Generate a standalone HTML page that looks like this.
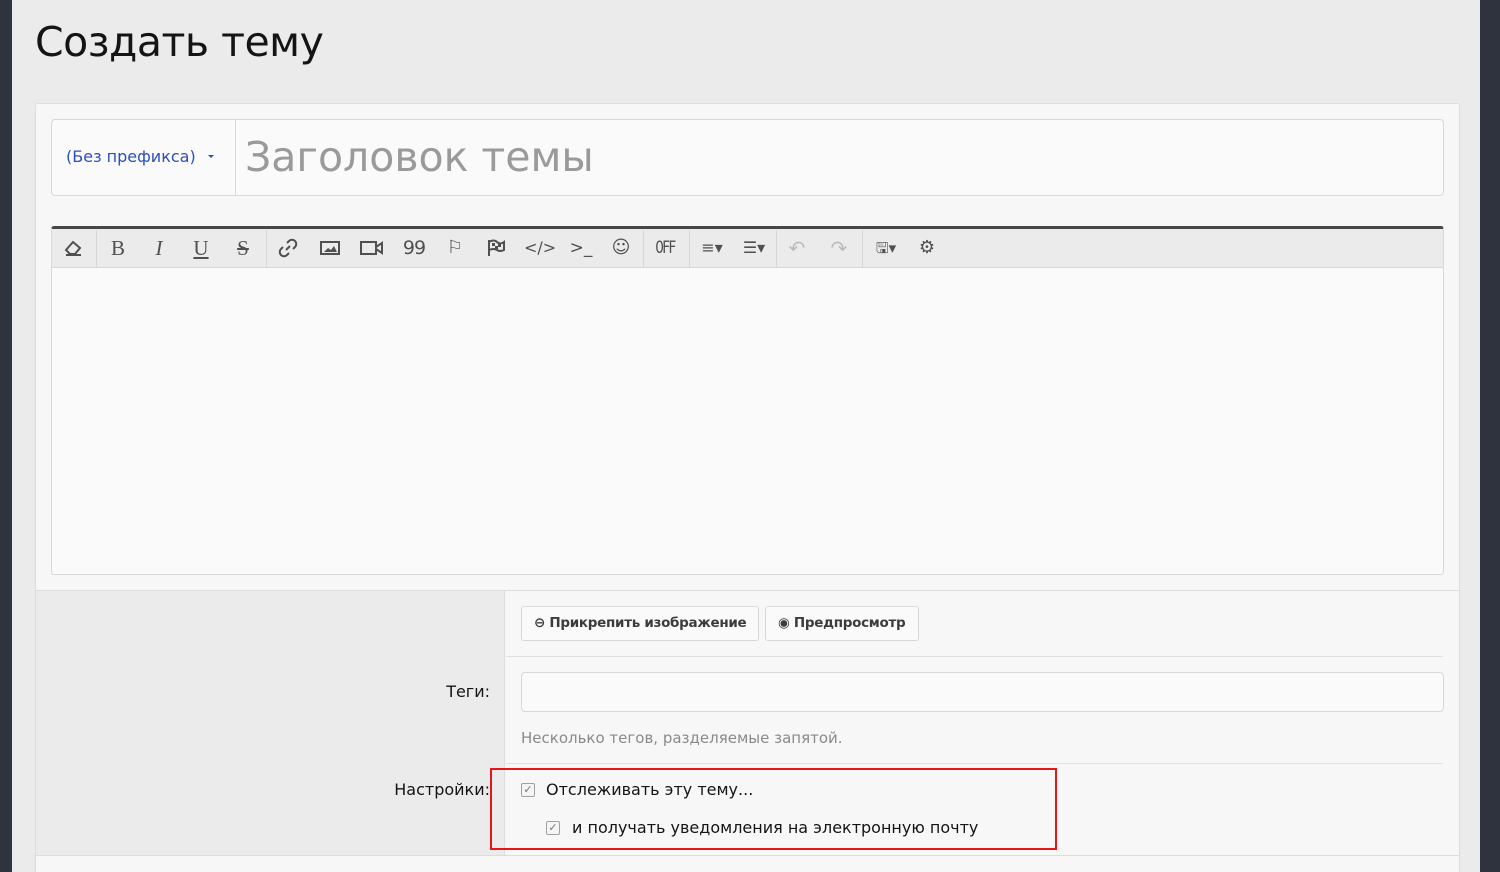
<!DOCTYPE html>
<html><head><meta charset="utf-8"><style>
*{box-sizing:border-box;margin:0;padding:0}
html,body{width:1500px;height:872px;overflow:hidden}
body{background:#ebebeb;font-family:"Liberation Sans","DejaVu Sans",sans-serif;position:relative;color:#141414}
.abs{position:absolute}
.strip{top:0;height:872px;background:#2f333d}
h1{position:absolute;left:35px;top:18px;font-size:41px;font-weight:normal;color:#141414;font-family:"DejaVu Sans","Liberation Sans",sans-serif;letter-spacing:-0.5px}
.panel{left:35px;top:103px;width:1425px;height:769px;background:#f7f7f7;border:1px solid #dcdcdc;border-bottom:none;border-radius:3px 3px 0 0}
.titlebox{left:51px;top:119px;width:1393px;height:77px;background:#fafafa;border:1px solid #d8d8d8;border-radius:4px}
.pref{left:66px;top:147px;font-size:16px;color:#2b4ec2;font-family:"DejaVu Sans",sans-serif}
.ph{left:245px;top:133px;font-size:41px;color:#9a9a9a;font-family:"DejaVu Sans",sans-serif}
.editor{left:51px;top:226px;width:1393px;height:349px;background:#fafafa;border:1px solid #d8d8d8;border-top:3px solid #474747;border-radius:3px}
.tb{left:52px;top:229px;width:1391px;height:39px;background:#ebebeb;border-bottom:1px solid #d8d8d8}
.ic{position:absolute;top:233px;width:30px;height:30px;text-align:center;line-height:30px;font-size:18px;color:#505050;font-family:"DejaVu Sans",sans-serif;white-space:nowrap}
.sep{position:absolute;top:230px;width:1px;height:37px;background:#d6d6d6}
.lower{left:36px;top:590px;width:1423px;height:266px;border-top:1px solid #ddd;border-bottom:1px solid #ddd}
.lcol{left:36px;top:591px;width:469px;height:264px;background:#ebebeb;border-right:1px solid #dcdcdc}
.btn{position:absolute;top:606px;height:35px;background:#fafafa;border:1px solid #d8d8d8;border-radius:3px;font-size:13.5px;font-weight:bold;color:#3c3c3c;line-height:33px;padding-left:12px;font-family:"DejaVu Sans",sans-serif;white-space:nowrap;letter-spacing:-0.3px;overflow:hidden}
.hl{position:absolute;left:506px;width:937px;height:1px;background:#e0e0e0}
.lbl{position:absolute;font-size:16px;text-align:right;right:1010px;font-family:"DejaVu Sans",sans-serif}
.cb{position:absolute;width:14px;height:14px;border:1px solid #a0a0a0;border-radius:2px;background:#f5f5f5;font-size:11px;line-height:12px;text-align:center;color:#777}
.t{position:absolute;font-size:16px;font-family:"DejaVu Sans",sans-serif;white-space:nowrap}
</style></head><body>
<div class="abs strip" style="left:0;width:12px"></div>
<div class="abs strip" style="left:1480px;width:20px"></div>
<h1>Создать тему</h1>
<div class="abs panel"></div>
<div class="abs titlebox"></div>
<div class="abs" style="left:235px;top:120px;width:1px;height:75px;background:#d8d8d8"></div>
<div class="abs pref">(Без префикса)</div>
<div class="abs" style="left:208px;top:155px;border-left:3px solid transparent;border-right:3px solid transparent;border-top:3px solid #2b4ec2"></div>
<div class="abs ph">Заголовок темы</div>
<div class="abs editor"></div>
<div class="abs tb"></div>
<div class="sep" style="left:96px"></div><div class="sep" style="left:266px"></div><div class="sep" style="left:643px"></div><div class="sep" style="left:689px"></div><div class="sep" style="left:776px"></div><div class="sep" style="left:862px"></div>
<div class="ic" style="left:58px"><svg width="20" height="18" viewBox="0 0 20 18" style="vertical-align:middle"><path d="M3 11 L10 3 L17 9 L12 15 H7Z M3 16 H18" fill="none" stroke="#505050" stroke-width="2"/></svg></div>
<div class="ic" style="left:103px;font-family:'Liberation Serif',serif;font-size:21px">B</div>
<div class="ic" style="left:144px;font-family:'Liberation Serif',serif;font-style:italic;font-size:21px">I</div>
<div class="ic" style="left:186px;text-decoration:underline;font-family:'Liberation Serif',serif;font-size:21px">U</div>
<div class="ic" style="left:228px;text-decoration:line-through;font-family:'Liberation Serif',serif;font-size:21px">S</div>
<div class="ic" style="left:273px"><svg width="20" height="20" viewBox="0 0 20 20" style="vertical-align:middle"><path d="M8 12 L12 8 M9 5 L11 3 A3.5 3.5 0 0 1 17 9 L15 11 M11 15 L9 17 A3.5 3.5 0 0 1 3 11 L5 9" fill="none" stroke="#505050" stroke-width="2"/></svg></div>
<div class="ic" style="left:315px"><svg width="20" height="16" viewBox="0 0 20 16" style="vertical-align:middle"><rect x="1" y="2" width="18" height="12" fill="none" stroke="#505050" stroke-width="2"/><path d="M4 12 L8 8 L11 10 L14 6 L17 12Z" fill="#505050"/></svg></div>
<div class="ic" style="left:357px"><svg width="24" height="16" viewBox="0 0 24 16" style="vertical-align:middle"><rect x="1" y="2" width="15" height="12" fill="none" stroke="#505050" stroke-width="2"/><path d="M16 7 L22 3 V13 L16 9" fill="none" stroke="#505050" stroke-width="2"/></svg></div>
<div class="ic" style="left:399px;font-size:19px;letter-spacing:-1px">99</div>
<div class="ic" style="left:440px">⚐</div>
<div class="ic" style="left:481px"><svg width="20" height="18" viewBox="0 0 20 18" style="vertical-align:middle"><path d="M3 1 V17 M3 3 Q8 0 11 3 T18 3 V11 Q14 13 11 11 T3 11" fill="none" stroke="#505050" stroke-width="2"/><path d="M6 4h3v3h-3zM12 5h3v3h-3zM9 7h3v3h-3z" fill="#505050"/></svg></div>
<div class="ic" style="left:524px;font-size:16px">&lt;/&gt;</div>
<div class="ic" style="left:566px;font-size:17px">&gt;_</div>
<div class="ic" style="left:606px">☺</div>
<div class="ic" style="left:650px;font-size:17px;letter-spacing:-2px;transform:scaleX(0.8)">0FF</div>
<div class="ic" style="left:697px;font-size:16px">≡▾</div>
<div class="ic" style="left:739px;font-size:16px">☰▾</div>
<div class="ic" style="left:782px;color:#bbb;font-size:20px">↶</div>
<div class="ic" style="left:824px;color:#bbb;font-size:20px">↷</div>
<div class="ic" style="left:871px;font-size:15px">🖫▾</div>
<div class="ic" style="left:912px">⚙</div>
<div class="abs lower"></div>
<div class="abs lcol"></div>
<div class="btn" style="left:521px;width:238px">⊖ Прикрепить изображение</div>
<div class="btn" style="left:765px;width:154px">◉ Предпросмотр</div>
<div class="hl" style="top:656px"></div>
<div class="lbl" style="top:682px">Теги:</div>
<div class="abs" style="left:521px;top:672px;width:923px;height:40px;background:#fafafa;border:1px solid #d8d8d8;border-radius:4px"></div>
<div class="t" style="left:521px;top:729px;font-size:15px;color:#8a8a8a">Несколько тегов, разделяемые запятой.</div>
<div class="hl" style="top:763px"></div>
<div class="lbl" style="top:780px">Настройки:</div>
<div class="cb" style="left:521px;top:783px">✓</div>
<div class="t" style="left:546px;top:780px">Отслеживать эту тему...</div>
<div class="cb" style="left:546px;top:821px">✓</div>
<div class="t" style="left:572px;top:818px">и получать уведомления на электронную почту</div>
<div class="abs" style="left:490px;top:768px;width:567px;height:82px;border:2px solid #e8141b"></div>
</body></html>
